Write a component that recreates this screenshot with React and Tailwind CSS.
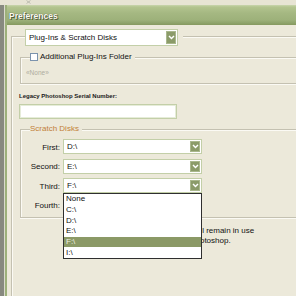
const Chevron = () => (
  <svg width="7" height="5" viewBox="0 0 7 5">
    <path d="M1 1 L3.5 3.6 L6 1" stroke="#ffffff" strokeWidth="1.4" fill="none" />
  </svg>
);

function Select({ value, className }) {
  return (
    <div className={`flex bg-white border border-[#c3cfa8] p-[1px] ${className}`}>
      <div className="flex-1 flex items-center pl-[2px] text-[8px] leading-none text-[#111111] pt-[1px]">{value}</div>
      <div className="w-[10px] flex items-center justify-center bg-[#8b9b69] border border-[#a9b78c]">
        <Chevron />
      </div>
    </div>
  );
}

const HLine = ({ className = "" }) => (
  <div className={`flex-1 h-[2px] border-t border-[#c4c1b1] bg-[#fbfaf4] self-start ${className}`} />
);

export default function App() {
  const items = ["None", "C:\\", "D:\\", "E:\\", "F:\\", "I:\\"];
  return (
    <div className="w-[296px] h-[296px] overflow-hidden bg-[#ece9da] font-['Liberation_Sans',Arial,sans-serif] flex flex-col">
      {/* background strip */}
      <div className="h-[5px] shrink-0 bg-[#e7e4d4] flex">
        <div className="ml-[26px]">
          <svg width="5" height="4" viewBox="0 0 5 4">
            <path d="M0.5 0.5 L4.5 3.5 M4.5 0.5 L0.5 3.5" stroke="#b3b2a6" strokeWidth="0.8" />
          </svg>
        </div>
      </div>
      <div className="flex flex-1">
        <div className="w-[4px] bg-[#87897f]" />
        <div className="w-[1px] bg-[#d9d9cc]" />
        <div className="flex-1 flex flex-col border-l-2 border-[#9cb07a]">
          {/* title bar */}
          <div className="h-[20px] shrink-0 flex items-center pl-[2px] pt-[2px] bg-[linear-gradient(#c9d5ad_0px,#b3c48f_2px,#a5b882_8px,#9db17a_15px,#8ea36b_18px,#86995f_20px)]">
            <span className="text-[8.5px] font-bold leading-none text-[#fafaf2] [text-shadow:0_0_1px_#3c4628,1px_1px_0_#56613c]">
              Preferences
            </span>
          </div>
          {/* body */}
          <div className="flex-1 flex flex-col pl-[4px] pt-[4px]">
            {/* outer panel top row */}
            <div className="flex h-[17px] shrink-0">
              <div className="self-end w-[14px] h-[10px] border-t border-l border-[#c4c1b1] shadow-[inset_1px_1px_0_#fbfaf4]" />
              <Select value="Plug-Ins & Scratch Disks" className="w-[153px] h-[17px]" />
              <div className="w-[5px]" />
              <HLine className="mt-[7px]" />
            </div>
            {/* outer panel body */}
            <div className="flex-1 flex flex-col border-l border-[#c4c1b1] shadow-[inset_1px_0_0_#fbfaf4]">
              {/* Additional plug-ins group */}
              <div className="mt-[6px] ml-[8px] flex flex-col">
                <div className="flex h-[10px]">
                  <div className="self-end w-[10px] h-[5px] border-t border-l border-[#c4c1b1] shadow-[inset_1px_1px_0_#fbfaf4]" />
                  <div className="self-center w-[8px] h-[8px] border border-[#7b93ad] bg-white" />
                  <span className="ml-[2px] text-[8px] leading-[10px] text-[#111111] whitespace-nowrap">Additional Plug-Ins Folder</span>
                  <div className="w-[3px]" />
                  <HLine className="mt-[5px]" />
                </div>
                <div className="h-[22px] border-l border-b border-[#c4c1b1] shadow-[inset_1px_0_0_#fbfaf4,0_1px_0_#fbfaf4] pl-[5px] pt-[7px]">
                  <span className="block text-[6.5px] leading-[7px] text-[#aeac9e]">«None»</span>
                </div>
              </div>
              {/* Legacy serial */}
              <div className="mt-[8px] ml-[7px] text-[6px] font-bold leading-[8px] text-[#1a1a1a] whitespace-nowrap">
                Legacy Photoshop Serial Number:
              </div>
              <div className="mt-[4px] ml-[7px] w-[158px] h-[15px] bg-white border border-[#c3cfa8] shadow-[inset_0_0_0_1px_#e6ecd9]" />
              {/* Scratch disks group */}
              <div className="mt-[5px] ml-[8px] flex flex-col">
                <div className="flex h-[10px]">
                  <div className="self-end w-[10px] h-[5px] border-t border-l border-[#c4c1b1] shadow-[inset_1px_1px_0_#fbfaf4]" />
                  <span className="text-[8px] leading-[10px] text-[#c27f38] whitespace-nowrap">Scratch Disks</span>
                  <div className="w-[3px]" />
                  <HLine className="mt-[5px]" />
                </div>
                <div className="border-l border-b border-[#c4c1b1] shadow-[inset_1px_0_0_#fbfaf4,0_1px_0_#fbfaf4] pt-[5px] pb-[4px] flex flex-col gap-[4.5px]">
                  {[
                    ["First:", "D:\\"],
                    ["Second:", "E:\\"],
                    ["Third:", "F:\\"],
                    ["Fourth:", ""],
                  ].map(([label, val], i) => (
                    <div key={label} className="flex items-center h-[15px]">
                      <div className="w-[39px] text-right text-[8px] leading-none text-[#111111] pt-[2px]">{label}</div>
                      <div className="ml-[3px] relative">
                        <Select value={val} className="w-[139px] h-[15px]" />
                        {i === 2 && (
                          <div className="absolute left-0 top-[15px] z-10 w-[139px] h-[66px] bg-white border border-[#2f2f2f] flex flex-col">
                            {items.map((it) => (
                              <div
                                key={it}
                                className={`h-[10.67px] flex items-center pl-[2px] text-[8px] leading-none ${
                                  it === "F:\\" ? "bg-[#8b9966] text-[#eef2e2]" : "text-[#111111]"
                                }`}
                              >
                                {it}
                              </div>
                            ))}
                          </div>
                        )}
                      </div>
                    </div>
                  ))}
                </div>
              </div>
              {/* note text (partly hidden) */}
              <div className="mt-[8px] ml-[131px] text-[8px] leading-[10px] text-[#111111] whitespace-nowrap">
                <div>Scratch disks will remain in use</div>
                <div>until you quit Photoshop.</div>
              </div>
            </div>
          </div>
        </div>
      </div>
    </div>
  );
}
